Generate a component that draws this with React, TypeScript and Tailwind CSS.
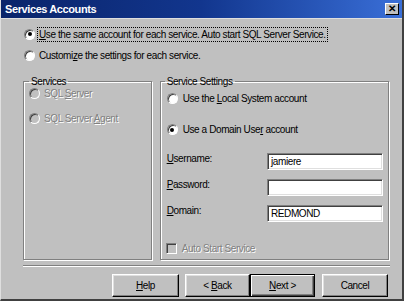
import React from "react";

const disabledText = "text-[#808080] [text-shadow:1px_1px_0_#ffffff]";

const Radio = ({ checked, disabled }: { checked?: boolean; disabled?: boolean }) => (
  <span
    className={`w-[11px] h-[11px] rounded-full shrink-0 flex items-center justify-center border border-t-[#808080] border-l-[#808080] border-b-white border-r-white shadow-[inset_1px_1px_0_#404040] ${
      disabled ? "bg-[#c0c0c0]" : "bg-white"
    }`}
  >
    {checked && <span className="w-[4px] h-[4px] rounded-full bg-black" />}
  </span>
);

const Mn = ({ children }: { children: React.ReactNode }) => <span className="underline underline-offset-[1px]">{children}</span>;

const TextBox = ({ value }: { value?: string }) => (
  <div className="w-[116px] h-[17px] bg-white flex items-center px-[3px] border border-t-[#808080] border-l-[#808080] border-b-white border-r-white shadow-[inset_1px_1px_0_#404040,inset_-1px_-1px_0_#dfdfdf]">
    {value}
  </div>
);

const Button = ({ children, isDefault, className = "" }: { children: React.ReactNode; isDefault?: boolean; className?: string }) => (
  <button
    className={`h-[23px] flex items-center justify-center bg-[#c0c0c0] ${
      isDefault
        ? "border border-black shadow-[inset_1px_1px_0_#ffffff,inset_-1px_-1px_0_#404040,inset_-2px_-2px_0_#808080]"
        : "border border-t-white border-l-white border-r-black border-b-black shadow-[inset_-1px_-1px_0_#808080,inset_1px_1px_0_#dfdfdf]"
    } ${className}`}
  >
    {children}
  </button>
);

export default function App() {
  return (
    <div className="w-[404px] h-[301px] bg-[#c0c0c0] flex flex-col overflow-hidden font-['Liberation_Sans',Arial,sans-serif] text-[10px] tracking-[-0.4px] leading-[13px] text-black border-l border-l-[#dfdfdf] border-r-2 border-b-2 border-r-[#404040] border-b-[#404040]">
      {/* Title bar */}
      <div className="h-[18px] shrink-0 flex items-center pl-[4px] pr-[3px] bg-gradient-to-r from-[#0a246a] via-[#12368e] to-[#3a6fd8]">
        <span className="font-bold text-white text-[11px] tracking-[-0.4px]">Services Accounts</span>
        <div className="ml-auto w-[14px] h-[12px] bg-[#c0c0c0] flex items-center justify-center border border-t-white border-l-white border-r-black border-b-black text-[10px] font-bold leading-none tracking-normal">
          ✕
        </div>
      </div>

      <div className="flex-1 flex flex-col pl-[22px] pr-[13px] border-t border-t-[#dfdfdf]">
        {/* Account choice */}
        <div className="mt-[8px] h-[14px] flex items-center pl-[1px]">
          <Radio checked />
          <span className="ml-[2px] px-[1px] border border-dotted border-black">
            <Mn>U</Mn>se the same account for each service. Auto start SQL Server Service.
          </span>
        </div>
        <div className="mt-[7px] h-[14px] flex items-center pl-[1px]">
          <Radio />
          <span className="ml-[4px]">
            Customi<Mn>z</Mn>e the settings for each service.
          </span>
        </div>

        {/* Group boxes */}
        <div className="mt-[13px] flex gap-[8px]">
          <fieldset className="w-[129px] h-[185px] border border-[#808080] shadow-[inset_1px_1px_0_#ffffff,1px_1px_0_#ffffff]">
            <legend className="ml-[5px] px-[2px]">Services</legend>
            <div className="mt-[-1px] pl-[5px] h-[13px] flex items-center gap-[4px]">
              <Radio disabled />
              <span className={disabledText}>
                SQL <Mn>S</Mn>erver
              </span>
            </div>
            <div className="mt-[12px] pl-[5px] h-[13px] flex items-center gap-[4px]">
              <Radio disabled />
              <span className={disabledText}>
                SQL Server <Mn>A</Mn>gent
              </span>
            </div>
          </fieldset>

          <fieldset className="w-[230px] h-[185px] border border-[#808080] shadow-[inset_1px_1px_0_#ffffff,1px_1px_0_#ffffff]">
            <legend className="ml-[4px] px-[2px]">Service Settings</legend>
            <div className="mt-[4px] pl-[6px] h-[13px] flex items-center gap-[5px]">
              <Radio />
              <span>
                Use the <Mn>L</Mn>ocal System account
              </span>
            </div>
            <div className="mt-[18px] pl-[6px] h-[13px] flex items-center gap-[5px]">
              <Radio checked />
              <span>
                Use a Domain Use<Mn>r</Mn> account
              </span>
            </div>

            <div className="mt-[17px] pl-[6px] pr-[5px] flex flex-col gap-[9px]">
              <div className="flex items-start justify-between">
                <span className="mt-[-1px]">
                  <Mn>U</Mn>sername:
                </span>
                <TextBox value="jamiere" />
              </div>
              <div className="flex items-start justify-between">
                <span className="mt-[-1px]">
                  <Mn>P</Mn>assword:
                </span>
                <TextBox />
              </div>
              <div className="flex items-start justify-between">
                <span className="mt-[-1px]">
                  <Mn>D</Mn>omain:
                </span>
                <TextBox value="REDMOND" />
              </div>
            </div>

            <div className="mt-[20px] pl-[5px] h-[13px] flex items-center gap-[5px]">
              <span className="w-[11px] h-[11px] bg-[#c0c0c0] border border-t-[#808080] border-l-[#808080] border-b-white border-r-white shadow-[inset_1px_1px_0_#404040]" />
              <span className={disabledText}>Auto Start Service</span>
            </div>
          </fieldset>
        </div>

        {/* Separator */}
        <div className="mt-[5px] w-[367px] border-t border-t-[#808080] border-b border-b-white" />

        {/* Buttons */}
        <div className="mt-[7px] flex justify-end pr-[1px]">
          <Button className="w-[67px]">
            <Mn>H</Mn>elp
          </Button>
          <Button className="w-[65px] ml-[6px]">
            &lt;&nbsp;<Mn>B</Mn>ack
          </Button>
          <Button className="w-[65px]" isDefault>
            <Mn>N</Mn>ext&nbsp;&gt;
          </Button>
          <Button className="w-[66px] ml-[7px]">Cancel</Button>
        </div>
      </div>
    </div>
  );
}
